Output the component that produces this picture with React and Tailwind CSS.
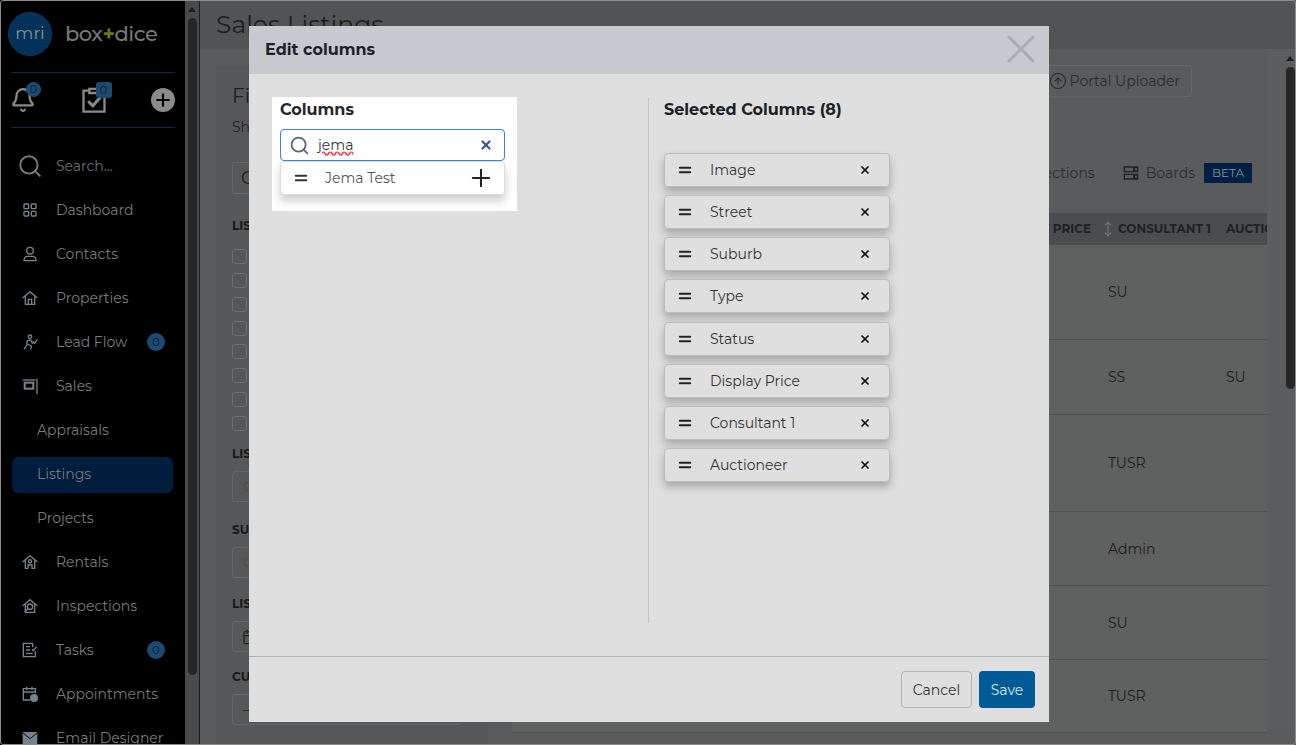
import React from 'react';
import { Search, X, Plus, Equal, CircleArrowUp, Bell, LayoutGrid, MoveVertical, Calendar } from 'lucide-react';

const font = 'font-["Montserrat","Inter","Liberation_Sans",sans-serif]';

// small line icons for the sidebar, none of these exist in lucide in this shape
const Svg = ({ className, children }) => (
  <svg viewBox="0 0 24 24" fill="none" stroke="currentColor" strokeWidth="2" className={className}>{children}</svg>
);
const IconUser = (p) => (
  <Svg {...p}><circle cx="12" cy="7" r="5" /><path d="M3 22c0-4 2.500-6.500 5-6.500h8c2.500 0 5 2.500 5 6.500z" /></Svg>
);
const IconHouse = (p) => (
  <Svg {...p}><path d="M1 12 12 2.500 23 12" /><path d="M5 9.500v12h14v-12" /><path d="M9.500 21.500V14h5v7.500" /></Svg>
);
const IconRun = (p) => (
  <Svg {...p}>
    <circle cx="12" cy="4" r="2.500" />
    <path d="M3 23l4-6 1-7 5-1 3 6" />
    <path d="M8 15l6 3-1 5" />
    <path d="M16 11l3 3 4-6" />
  </Svg>
);
const IconSale = (p) => (
  <Svg {...p}>
    <path d="M1 3h19" strokeWidth="2" />
    <path d="M22.500 1v23" strokeWidth="2" />
    <rect x="4" y="7" width="13" height="9" strokeWidth="3" />
  </Svg>
);
const IconRental = (p) => (
  <Svg {...p}>
    <path d="M1 12 12 2.500 23 12" />
    <path d="M5 9.500v12h4v-5h6v5h4v-12" />
    <circle cx="12" cy="11" r="2.500" />
  </Svg>
);
const IconInspect = (p) => (
  <Svg {...p}>
    <path d="M1 12 12 2.500 23 12" />
    <path d="M5 9.500v12h14v-12" />
    <circle cx="12" cy="13" r="4" />
    <path d="M9 16l-5 5" />
  </Svg>
);
const IconTasks = (p) => (
  <Svg {...p}>
    <path d="M16 8V2H2v20h18v-8" />
    <path d="M6 7h6M6 12h6M6 17h10" />
    <path d="M15 11l2 2 5-6" />
  </Svg>
);
const IconAppt = (p) => (
  <Svg {...p}>
    <path d="M12 21H2V4h18v7" />
    <path d="M2 9h18M7 1v5M15 1v5" />
    <circle cx="18" cy="18" r="5" fill="currentColor" />
  </Svg>
);
const IconMail = (p) => (
  <svg viewBox="0 0 24 24" className={p.className}>
    <rect x="1" y="3" width="22" height="18" fill="currentColor" />
    <path d="M1 4l11 9 11-9" fill="none" stroke="#000" strokeWidth="1.500" />
  </svg>
);
const IconClipboard = (p) => (
  <Svg {...p}>
    <path d="M8 4H3v18h18V4h-5" />
    <path d="M8 6V2.500h8V6z" />
    <path d="M7 13l4 4 7-8" strokeWidth="2.500" />
  </Svg>
);
const IconBoards = (p) => (
  <svg viewBox="0 0 24 24" className={p.className}>
    <path fillRule="evenodd" fill="currentColor" d="M1 2h22v9H1zM3 4v5h12V4zM1 13h22v9H1zM3 15v5h12v-5zM18 5h3v3h-3zM18 16h3v3h-3z" />
  </svg>
);

const navTop = [
  { label: 'Dashboard', icon: LayoutGrid },
  { label: 'Contacts', icon: IconUser },
  { label: 'Properties', icon: IconHouse },
  { label: 'Lead Flow', icon: IconRun, badge: 0 },
  { label: 'Sales', icon: IconSale },
];
const navSub = ['Appraisals', 'Listings', 'Projects'];
const navBottom = [
  { label: 'Rentals', icon: IconRental },
  { label: 'Inspections', icon: IconInspect },
  { label: 'Tasks', icon: IconTasks, badge: 0 },
  { label: 'Appointments', icon: IconAppt },
  { label: 'Email Designer', icon: IconMail },
];
const selected = ['Image', 'Street', 'Suburb', 'Type', 'Status', 'Display Price', 'Consultant 1', 'Auctioneer'];
const rows = [
  { h: 'h-[95px]', c: 'SU', a: '' },
  { h: 'h-[75px]', c: 'SS', a: 'SU' },
  { h: 'h-[97px]', c: 'TUSR', a: '' },
  { h: 'h-[74px]', c: 'Admin', a: '' },
  { h: 'h-[74px]', c: 'SU', a: '' },
  { h: 'h-[73px]', c: 'TUSR', a: '' },
];

const NavItem = ({ item }) => {
  const Icon = item.icon;
  return (
    <div className="flex items-center h-11 pl-[22px]">
      <Icon className="w-[16px] h-[16px] text-[#75848e]" />
      <span className="ml-[18px] text-sm text-[#7b7b7b] w-[91px] whitespace-nowrap">{item.label}</span>
      {item.badge !== undefined && (
        <span className="w-[18px] h-[18px] rounded-full bg-[#1d4a70] text-[11px] text-[#0b1a28] flex items-center justify-center">{item.badge}</span>
      )}
    </div>
  );
};

const Sidebar = () => (
  <div className="w-[185px] h-full shrink-0 bg-black overflow-hidden">
    <div className="flex items-center h-[72px] pl-2 pb-[4px]">
      <div className="w-11 h-11 rounded-full bg-[#03315a] border border-[#0a3f5f] flex items-center justify-center text-[17px] text-[#7c93a0]">
        m<span className="text-[#86a06d]">ri</span>
      </div>
      <div className="ml-[13px] text-[21px] font-medium text-[#787878] tracking-[-0.5px]">
        box<span className="text-[#647a1c] font-bold">+</span>dice
      </div>
    </div>
    <div className="ml-[11px] mr-[10px] h-[56px] border-y border-[#0c2a4a] flex items-center justify-between">
      <div className="relative -ml-px">
        <Bell className="w-[26px] h-[26px] text-[#8a8a8a]" strokeWidth={2} />
        <span className="absolute -top-[5px] left-4 w-[15px] h-[15px] rounded-full bg-[#1d4a70] text-[11px] text-[#0b1a28] flex items-center justify-center">0</span>
      </div>
      <div className="relative">
        <IconClipboard className="w-[28px] h-[28px] text-[#8a8a8a]" />
        <span className="absolute -top-[4px] left-[16px] w-[16px] h-[16px] rounded-[3px] bg-[#1d4a70] text-[11px] text-[#0b1a28] flex items-center justify-center">0</span>
      </div>
      <div className="w-6 h-6 rounded-full bg-[#8a8a8a] flex items-center justify-center">
        <Plus className="w-5 h-5 text-black" strokeWidth={2.5} />
      </div>
    </div>
    <div className="flex items-center h-11 pl-[17px] mt-4">
      <Search className="w-[26px] h-[26px] text-[#7a7a7a]" strokeWidth={1.75} />
      <span className="ml-[13px] text-sm text-[#6e6e6e]">Search...</span>
    </div>
    {navTop.map((item) => <NavItem key={item.label} item={item} />)}
    {navSub.map((label) => (
      <div key={label} className="h-11 pt-[5px] pb-[3px] px-3">
        <div className={`h-9 pb-[2px] rounded-md flex items-center pl-[25px] text-sm text-[#7b7b7b] ${label === 'Listings' ? 'bg-[#001d3d]' : ''}`}>
          {label}
        </div>
      </div>
    ))}
    {navBottom.map((item) => <NavItem key={item.label} item={item} />)}
  </div>
);

const FilterLabel = ({ children, className }) => (
  <div className={`text-xs font-bold text-[#17181a] whitespace-nowrap ${className}`}>{children}</div>
);
const FilterBox = ({ children, className }) => (
  <div className={`w-[230px] h-[31px] rounded border border-[#666] flex items-center pl-[10px] text-[#222] ${className}`}>{children}</div>
);

const FilterPanel = () => (
  <div className="w-[272px] shrink-0 h-full bg-[#565759] pl-4 pt-[19px]">
    <div className="text-xl leading-6 text-[#1c1d1f]">Filters</div>
    <div className="text-sm leading-5 text-[#222] mt-[9px]">Show</div>
    <div className="w-[230px] h-8 mt-[25px] rounded border border-[#666] text-[#222] pl-2 text-lg leading-[30px]">Clear</div>
    <FilterLabel className="mt-[24px] leading-4">LISTING STATUS</FilterLabel>
    <div className="mt-[15px] flex flex-col gap-[8.860px]">
      {[0, 1, 2, 3, 4, 5, 6, 7].map((i) => (
        <div key={i} className="w-[15px] h-[15px] rounded-[3px] border border-[#6e6e6e]"></div>
      ))}
    </div>
    <FilterLabel className="mt-[15px] leading-4">LISTING TYPE</FilterLabel>
    <FilterBox className="mt-[9px]"><span className="text-[#5a4a3a] text-xs">○</span></FilterBox>
    <FilterLabel className="mt-[20px] leading-4">SUBURB</FilterLabel>
    <FilterBox className="mt-[9px]"><span className="text-[#5a4a3a] text-xs">○</span></FilterBox>
    <FilterLabel className="mt-[18px] leading-4">LISTED</FilterLabel>
    <FilterBox className="mt-[9px]"><Calendar className="w-[16px] h-[16px] -ml-[1px]" /></FilterBox>
    <FilterLabel className="mt-[17px] leading-4">CURRENT</FilterLabel>
    <FilterBox className="mt-[9px]"><span className="text-base">–</span></FilterBox>
  </div>
);

const Background = () => (
  <div className="flex-1 min-w-0 h-full flex flex-col bg-[#5a5b5c]">
    <div className="h-[49px] shrink-0 bg-[#525355] pl-4 text-[25px] leading-[49px] text-[#1c1d1f] overflow-hidden">Sales Listings</div>
    <div className="flex-1 min-h-0 flex pl-4 pt-4 overflow-hidden">
      <FilterPanel />
      <div className="w-[755px] shrink-0 ml-6 flex flex-col">
        <div className="self-end mr-[75px] h-8 w-[190px] rounded border border-[#666] flex items-center justify-end pr-[11px] text-sm text-[#2b2c2e]">
          <CircleArrowUp className="w-[18px] h-[18px] mr-[3px]" strokeWidth={1.5} />Portal Uploader
        </div>
        <div className="self-end mr-[15px] flex items-center h-5 mt-[66px] text-sm text-[#2b2c2e]">
          <span>Collections</span>
          <IconBoards className="w-[16px] h-[16px] ml-7 text-[#222]" />
          <span className="ml-[7px]">Boards</span>
          <span className="ml-[9px] bg-[#001f42] text-[#8291a1] text-[12px] w-12 text-center h-5 leading-5">BETA</span>
        </div>
        <div className="mt-[30px] h-8 shrink-0 bg-[#4a4c50] flex items-center text-xs font-bold text-[#1f2126]">
          <div className="flex-1 text-right pr-[17px]">DISPLAY PRICE</div>
          <div className="w-[118px] flex items-center whitespace-nowrap">
            <MoveVertical className="w-4 h-4 -ml-2 text-[#707277]" strokeWidth={1.75} />
            <span className="ml-[2px]">CONSULTANT 1</span>
          </div>
          <div className="w-[41px] overflow-hidden whitespace-nowrap">AUCTIONEER</div>
        </div>
        {rows.map((row, i) => (
          <div key={i} className={`${row.h} shrink-0 flex items-center bg-[#5f6060] border-b border-[#505153] text-sm text-[#1d1e20]`}>
            <div className="flex-1"></div>
            <div className="w-[118px]">{row.c}</div>
            <div className="w-[41px]">{row.a}</div>
          </div>
        ))}
      </div>
      <div className="flex-1 h-full bg-[#5c5d5e] -mt-4"></div>
    </div>
  </div>
);

const Modal = () => (
  <div className="absolute left-[249px] top-[26px] w-[800px] h-[696px] bg-[#dfdfdf] flex flex-col">
    <div className="h-12 shrink-0 bg-[#c6c9cd] flex items-center justify-between pl-4 pr-[4px]">
      <span className="text-base font-bold text-[#1b1f27]">Edit columns</span>
      <X className="w-12 h-12 -mt-[3px] text-[#a9adb2]" strokeWidth={1.5} />
    </div>
    <div className="flex-1 min-h-0 flex pt-6">
      <div className="w-[400px] h-[525px] border-r border-[#c4c4c4] pl-[23px]">
        <div className="w-[245px] h-[114px] -mt-[1px] bg-white pl-2 pt-px">
          <div className="text-base font-bold text-[#23262d] leading-[24px]">Columns</div>
          <div className="mt-[7px] w-[225px] h-8 rounded border border-[#3b82e8] flex items-center pl-2 pr-[11px]">
            <Search className="w-[21px] h-[21px] text-[#5c6670]" strokeWidth={2} />
            <span className="ml-2 flex-1 text-sm text-[#333] underline decoration-wavy decoration-red-500">jema</span>
            <X className="w-[14px] h-[14px] text-[#3b5a94]" strokeWidth={4} />
          </div>
          <div className="w-[225px] h-[34px] rounded border border-[#dcdcdc] bg-white shadow-[0_6px_10px_rgba(0,0,0,0.2)] flex items-center pl-[11px] pr-[9px]">
            <Equal className="w-[18px] h-[18px] text-[#333]" strokeWidth={2.5} />
            <span className="ml-[15px] flex-1 text-sm text-[#555]">Jema Test</span>
            <Plus className="w-7 h-7 text-[#1e2229]" strokeWidth={1.75} />
          </div>
        </div>
      </div>
      <div className="flex-1 pl-[15px]">
        <div className="text-base font-bold text-[#1b1f27] leading-[24px]">Selected Columns (8)</div>
        <div className="mt-[31px] flex flex-col gap-[8.150px] w-[226px]">
          {selected.map((label) => (
            <div key={label} className="h-[34px] shrink-0 rounded border border-[#bdbdbd] bg-[#dfdfdf] shadow-[0_5px_8px_rgba(0,0,0,0.25)] flex items-center pl-[11px] pr-[18px]">
              <Equal className="w-[18px] h-[18px] text-[#222]" strokeWidth={2.5} />
              <span className="ml-[16px] flex-1 text-sm text-[#333]">{label}</span>
              <X className="w-3 h-3 text-[#111]" strokeWidth={3.5} />
            </div>
          ))}
        </div>
      </div>
    </div>
    <div className="h-[66px] shrink-0 border-t border-[#aab0ba] flex items-center justify-end gap-[7px] pr-[14px]">
      <button className="w-[71px] h-[37px] rounded border border-[#b4b4b4] text-sm text-[#333]">Cancel</button>
      <button className="w-[56px] h-[37px] rounded bg-[#005a96] text-sm text-[#dbe6ef]">Save</button>
    </div>
  </div>
);

const Scrollbar = ({ thumb, className }) => (
  <div className={`flex flex-col items-center ${className}`}>
    <div className="mt-[7px] w-0 h-0 border-x-[4px] border-x-transparent border-b-[5px] border-b-[#1d1d1d]"></div>
    <div className={`w-[9px] mt-[6px] rounded-full bg-[#262626] ${thumb}`}></div>
  </div>
);

export default function App() {
  return (
    <div className={`relative w-[1296px] h-[745px] overflow-hidden flex bg-black ${font}`}>
      <Sidebar />
      <Scrollbar thumb="h-[657px]" className="w-[14px] h-full shrink-0 bg-[#4a4a4b] border-r border-[#1d1d1d] box-content" />
      <Background />
      {/* main page scrollbar sits on top of the page's right edge */}
      <Scrollbar thumb="h-[322px]" className="absolute right-[1px] top-[49px] w-[10px]" />
      <Modal />
      <div className="absolute inset-0 rounded-[3px] border border-[#8c8c8c] pointer-events-none"></div>
    </div>
  );
}
